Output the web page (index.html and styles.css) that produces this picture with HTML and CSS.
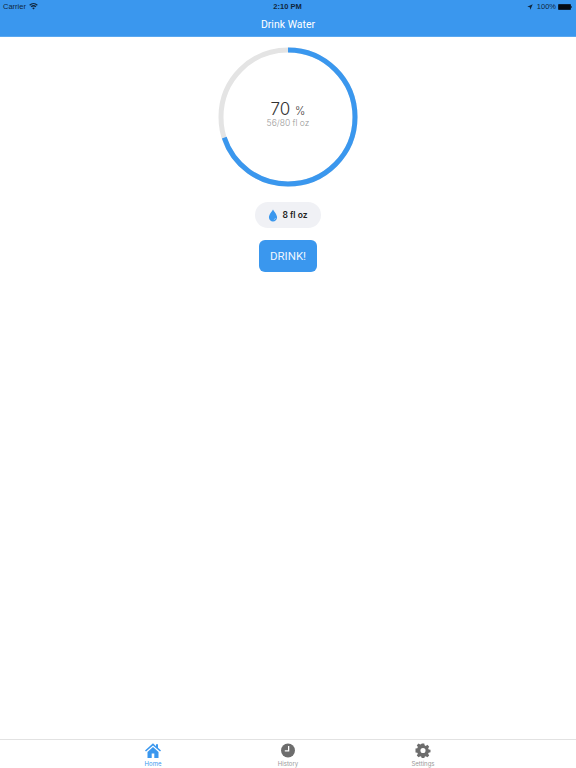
FILE: index.html
```html
<!DOCTYPE html>
<html lang="en">
<head>
    <meta charset="UTF-8">
    <meta name="viewport" content="width=device-width, initial-scale=1.0">
    <title>Drink Water</title>
    <link rel="stylesheet" href="styles.css">
</head>
<body>
    <div class="app">
        <header class="top-bar">
            <div class="status-bar">
                <div class="status-left">
                    <span>Carrier</span>
                    <svg class="wifi-icon" viewBox="0 0 16 12"><path d="M8 11.500 5.600 8.700a3.600 3.600 0 0 1 4.800 0zM4.500 7.400 3 5.700a7.400 7.400 0 0 1 10 0l-1.500 1.700a5.200 5.200 0 0 0-7 0zM1.900 4.500.4 2.800a11.300 11.300 0 0 1 15.200 0l-1.500 1.700a9 9 0 0 0-12.200 0z"/></svg>
                </div>
                <div class="status-time">2:10 PM</div>
                <div class="status-right">
                    <svg class="location-icon" viewBox="0 0 10 10"><path d="M9.500.5 5.600 9.500 4.700 5.300.5 4.400z"/></svg>
                    <span>100%</span>
                    <div class="battery"><div class="battery-fill"></div></div>
                    <div class="battery-nub"></div>
                </div>
            </div>
            <h1 class="nav-title">Drink Water</h1>
        </header>

        <main class="home">
            <div class="progress-ring">
                <svg class="ring-svg" viewBox="0 0 140 140">
                    <circle class="ring-track" cx="70" cy="70" r="67"/>
                    <circle class="ring-value" cx="70" cy="70" r="67" pathLength="100" stroke-dasharray="70 100" transform="rotate(-90 70 70)"/>
                </svg>
                <div class="ring-text">
                    <div class="ring-percent">70 <span class="percent-sign">%</span></div>
                    <div class="ring-amount">56/80 fl oz</div>
                </div>
            </div>

            <div class="serving-pill">
                <svg class="drop-icon" viewBox="0 0 12 16"><path d="M6 .5C4.800 3 1 6.300 1 10.300 1 13.300 3.200 15.500 6 15.500s5-2.200 5-5.200C11 6.300 7.200 3 6 .5z"/><path class="drop-shine" d="M7 13.200c1.200-.2 2-1 2.200-2.200"/></svg>
                <span>8 fl oz</span>
            </div>

            <button class="drink-btn">DRINK!</button>
        </main>

        <nav class="tab-bar">
            <div class="tab tab-active">
                <svg class="tab-icon" viewBox="0 0 16 15"><path fill="#3a97ee" d="M8 .3 0 7.500l1 1.100L8 2.400l7 6.200 1-1.100-3-2.700V1.200h-2v2zM2.500 9v6h4.200v-4.500h2.600V15h4.200V9L8 4.100z"/></svg>
                <span class="tab-label">Home</span>
            </div>
            <div class="tab">
                <svg class="tab-icon" viewBox="0 0 14 14"><circle fill="#6d6d6d" cx="7" cy="7" r="6.500"/><path fill="none" stroke="#fff" stroke-width="1.200" d="M7.600 2.800v4.600H4"/></svg>
                <span class="tab-label">History</span>
            </div>
            <div class="tab">
                <svg class="tab-icon" viewBox="0 0 14 14"><path fill="#6d6d6d" fill-rule="evenodd" d="M5.800.5h2.400l.3 1.700 1.100.5 1.500-1 1.700 1.700-1 1.500.5 1.100 1.700.3v2.400l-1.700.3-.5 1.100 1 1.500-1.700 1.700-1.500-1-1.100.5-.3 1.700H5.800l-.3-1.700-1.100-.5-1.500 1-1.700-1.700 1-1.500-.5-1.100L0 8.900V5.100l1.700-.3.500-1.100-1-1.500 1.700-1.700 1.500 1 1.100-.5zM7 4.600a2.400 2.400 0 1 0 0 4.800 2.400 2.400 0 0 0 0-4.800z"/></svg>
                <span class="tab-label">Settings</span>
            </div>
        </nav>
    </div>
</body>
</html>
```

FILE: styles.css
```css
* {
    margin: 0;
    padding: 0;
    box-sizing: border-box;
}

body {
    font-family: Inter, 'Liberation Sans', sans-serif;
    background: white;
    overflow: hidden;
}

.app {
    height: 768px;
    display: flex;
    flex-direction: column;
}

.top-bar {
    height: 37px;
    background: #3a97ee;
    border-bottom: 1px solid #5aa8f0;
}

.status-bar {
    height: 12px;
    padding: 1px 4px 0 3px;
    display: flex;
    align-items: center;
    justify-content: space-between;
    font-family: 'Liberation Sans', sans-serif;
    font-size: 7.5px;
    color: #10263c;
}

.status-left,
.status-right {
    width: 120px;
    display: flex;
    align-items: center;
}

.status-right {
    justify-content: flex-end;
}

.status-time {
    font-weight: 600;
}

.wifi-icon {
    width: 9px;
    height: 7px;
    margin-left: 3px;
    fill: #10263c;
}

.location-icon {
    width: 6px;
    height: 6px;
    margin-right: 4px;
    fill: #10263c;
}

.battery {
    width: 13px;
    height: 6px;
    margin-left: 2px;
    padding: 1px;
    border-radius: 1px;
    background: #0d1f33;
}

.battery-fill {
    height: 100%;
    background: #050b12;
}

.battery-nub {
    width: 1px;
    height: 2px;
    background: #1f4a75;
}

.nav-title {
    margin-top: 2px;
    font-family: Roboto, sans-serif;
    font-size: 10.5px;
    line-height: 22px;
    font-weight: 400;
    text-align: center;
    color: white;
}

.home {
    flex: 1;
    display: flex;
    flex-direction: column;
    align-items: center;
    padding-top: 10px;
}

.progress-ring {
    width: 140px;
    height: 140px;
    display: flex;
    align-items: center;
    justify-content: center;
    position: relative;
}

.ring-svg {
    position: absolute;
    inset: 0;
    width: 140px;
    height: 140px;
}

.ring-track,
.ring-value {
    fill: none;
    stroke-width: 5;
}

.ring-track {
    stroke: #e4e4e4;
}

.ring-value {
    stroke: #3a97ee;
}

.ring-text {
    text-align: center;
    margin-bottom: 5px;
}

.ring-percent {
    font-size: 17px;
    line-height: 16px;
    font-weight: 300;
    color: #333;
}

.percent-sign {
    font-size: 11px;
    font-weight: 300;
}

.ring-amount {
    font-size: 8.5px;
    line-height: 9px;
    font-weight: 300;
    color: #999;
}

.serving-pill {
    width: 66px;
    height: 26px;
    margin-top: 15px;
    border-radius: 13px;
    background: #f0f1f5;
    display: flex;
    align-items: center;
    justify-content: center;
    gap: 4px;
    font-size: 8.5px;
    font-weight: 600;
    color: #222;
}

.drop-icon {
    width: 10px;
    height: 13px;
    fill: #3a97ee;
}

.drop-shine {
    fill: none;
    stroke: #a8d2f7;
    stroke-width: 0.8;
}

.drink-btn {
    width: 58px;
    height: 32px;
    margin-top: 12px;
    border: none;
    border-radius: 6px;
    background: #3a97ee;
    color: #eef6fe;
    font-family: Roboto, sans-serif;
    font-size: 11.5px;
}

.tab-bar {
    height: 29px;
    border-top: 1px solid #e2e2e2;
    display: flex;
    justify-content: center;
}

.tab {
    width: 135px;
    display: flex;
    flex-direction: column;
    align-items: center;
    padding-top: 3px;
    color: #999;
}

.tab-active {
    color: #3a97ee;
}

.tab-icon {
    width: 16px;
    height: 15px;
}

.tab-label {
    margin-top: 2px;
    font-size: 6px;
    line-height: 7px;
}
```
